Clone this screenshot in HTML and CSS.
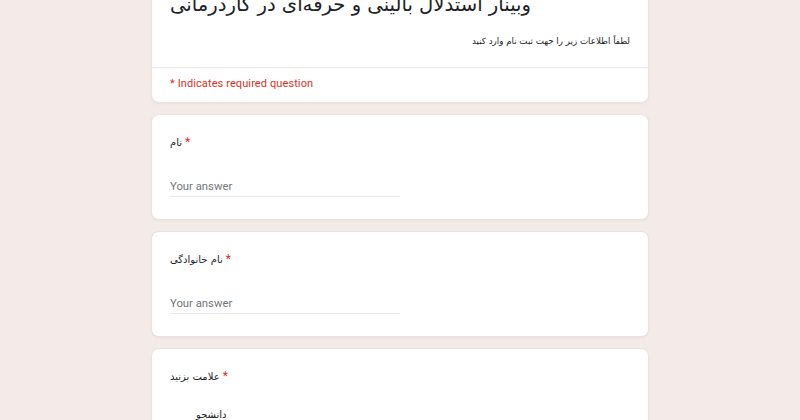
FILE: index.html
```html
<!DOCTYPE html>
<html lang="fa">
<head>
<meta charset="utf-8">
<title>Form</title>
<link rel="stylesheet" href="styles.css">
</head>
<body>
<div class="page">
  <div class="card header">
    <div class="header-top">
      <div class="title">وبینار استدلال بالینی و حرفه‌ای در کاردرمانی</div>
      <div class="desc" dir="rtl">لطفاً اطلاعات زیر را جهت ثبت نام وارد کنید</div>
    </div>
    <div class="required-note">* Indicates required question</div>
  </div>

  <div class="card question">
    <div class="q-label"><span class="fa">نام</span> <span class="star">*</span></div>
    <div class="answer">Your answer</div>
  </div>

  <div class="card question">
    <div class="q-label"><span class="fa">نام خانوادگی</span> <span class="star">*</span></div>
    <div class="answer">Your answer</div>
  </div>

  <div class="card question">
    <div class="q-label"><span class="fa">علامت بزنید</span> <span class="star">*</span></div>
    <div class="option"><span class="fa">دانشجو</span></div>
  </div>
</div>
</body>
</html>
```
FILE: styles.css
```css
html, body {
  margin: 0;
  padding: 0;
  background: #f4ebe8;
  font-family: Roboto, "DejaVu Sans", sans-serif;
  color: #202124;
}
.page {
  width: 498px;
  margin: -36px auto 0;
  display: flex;
  flex-direction: column;
  gap: 11px;
}
.card {
  background: #fff;
  border-radius: 8px;
  border: 1px solid #ece3e0;
  box-sizing: border-box;
  box-shadow: 0 1px 2px rgba(120, 90, 80, 0.08);
}
.header-top {
  padding: 22px 18px 19px;
  border-bottom: 1px solid #efe7e4;
}
.title {
  font-family: "DejaVu Sans", sans-serif;
  font-size: 19.6px;
  line-height: 36px;
  white-space: nowrap;
  color: #202124;
}
.desc {
  margin-top: 11px;
  font-family: "DejaVu Sans", sans-serif;
  font-size: 8.7px;
  line-height: 14px;
  color: #202124;
}
.required-note {
  padding: 8px 18px 10px;
  font-size: 11px;
  line-height: 16px;
  color: #d93025;
  letter-spacing: 0.1px;
}
.question {
  height: 106px;
  padding: 18px 18px 0;
}
.q-label {
  font-size: 12px;
  line-height: 18px;
}
.fa {
  font-family: "DejaVu Sans", sans-serif;
  font-size: 10px;
}
.star {
  color: #d93025;
  font-size: 12px;
}
.answer {
  margin-top: 25px;
  width: 230px;
  font-size: 11.3px;
  line-height: 19px;
  color: #70757a;
  border-bottom: 1px solid #ebe7e6;
}
.option {
  margin-top: 18px;
  padding-left: 26px;
  line-height: 18px;
}
```
